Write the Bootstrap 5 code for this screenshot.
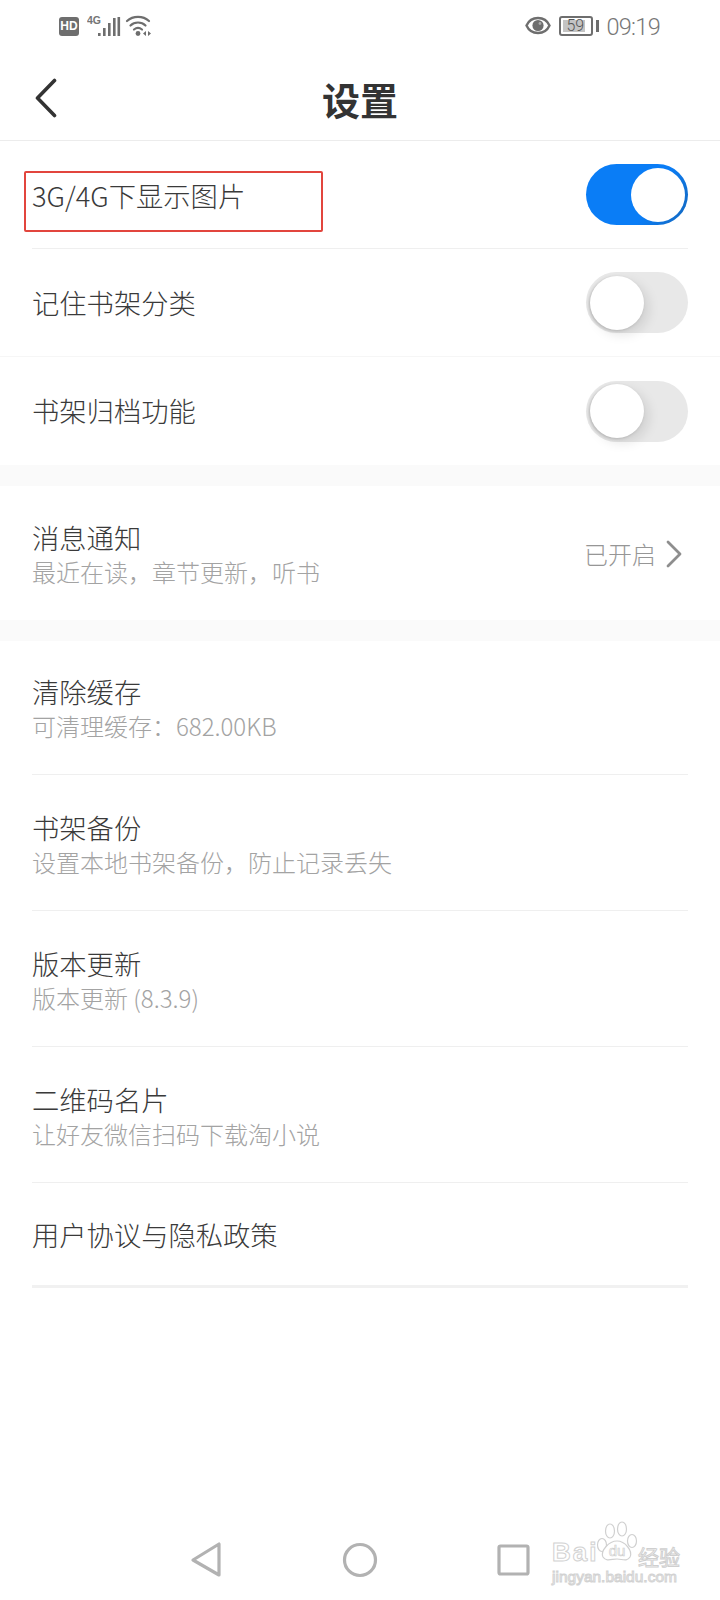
<!DOCTYPE html>
<html lang="zh-CN">
<head>
  <meta charset="UTF-8">
  <title>设置</title>
  <link href="https://cdn.jsdelivr.net/npm/bootstrap@5.3.0/dist/css/bootstrap.min.css" rel="stylesheet">
  <style>
    body { width: 720px; height: 1600px; overflow: hidden; background: #fff; color: #3a3a3a; font-family: "Noto Sans CJK SC", "Noto Sans", sans-serif; font-weight: 300; }
    .phone { width: 720px; height: 1600px; }
    .status-bar { height: 56px; padding: 15px 60px 0 59px; color: #757575; }
    .hd-tag { width: 20px; height: 19px; margin-top: 2px; background: #6e6e6e; color: #fff; border-radius: 3px; font: 700 12px/19px "Liberation Sans", sans-serif; text-align: center; }
    .eye-icon { margin: 1px 8px 0 0; }
    .clock { font: 300 23.5px/24px "Roboto", sans-serif; letter-spacing: -.7px; color: #777; margin-left: 7px; }
    .batt { width: 34px; height: 20px; margin-top: 1px; border: 2px solid #6e6e6e; border-radius: 3px; padding: 2px; }
    .batt-fill { width: 22px; height: 12px; background: #c4c4c4; font: 300 16px/12px "Roboto", sans-serif; color: #555; padding-left: 3px; }
    .batt-nub { width: 3px; height: 12px; background: #6e6e6e; margin: 5px 0 0 3px; }
    .top-bar { height: 85px; border-bottom: 1px solid #ececec; }
    .top-side { width: 100px; padding-left: 35px; }
    .top-title { font-size: 38px; font-weight: 700; color: #333; line-height: 85px; }
    .row-s { height: 108px; }
    .row-s.line-full { border-bottom: 1px solid #f6f6f6; }
    .row-s .row-label { padding-bottom: 2px; }
    .row-s .label-low { padding-bottom: 0; }
    .inset { margin: 0 32px 0 32px; }
    .inset-line { border-bottom: 1px solid #efefef; }
    .row-label { font-size: 27.3px; line-height: 36px; color: #3a3a3a; }
    .row-sub { font-size: 24px; line-height: 36px; color: #a3a3a3; }
    .band { height: 21px; background: #fafafa; }
    .row-t { height: 136px; padding-top: 35px; }
    .row-t.first { height: 134px; padding-top: 33px; }
    .row-n { height: 134px; padding-top: 34px; }
    .row-t .row-label, .row-n .row-label { line-height: 34px; }
    .row-last { height: 105px; border-bottom: 3px solid #f1f1f1; }
    .row-right { font-size: 24px; color: #969696; padding-right: 6px; }
    .chev-r { margin-left: 10px; }
    .toggle { width: 102px; height: 61px; border-radius: 31px; padding: 4px; background: #e8e8e8; }
    .toggle.on { background: linear-gradient(120deg, #0a7df6 62%, #1467bc 100%); justify-content: flex-end; padding-right: 3px; }
    .knob { width: 54px; height: 54px; border-radius: 50%; background: #fff; box-shadow: -1px 1px 3px #b4b4b4, 5px 5px 12px rgba(0,0,0,.1); }
    .on .knob { box-shadow: none; }
    .nav-keys { height: 80px; }
    .red-box { left: 24px; top: 171px; width: 299px; height: 61px; border: 2px solid #e2453d; border-radius: 2px; }
    .wm { left: 552px; top: 1516px; width: 140px; height: 72px; }
    .wm-bai, .wm-jy { color: #fff; -webkit-text-stroke: 1px #d2d2d2; font-family: "Liberation Sans", sans-serif; }
    .wm-bai { left: 0; top: 20px; font-size: 26px; line-height: 32px; font-weight: 700; letter-spacing: 2px; }
    .wm-paw { left: 42px; top: 5px; }
    .wm-cn { left: 86px; top: 26px; font-size: 21px; line-height: 28px; color: #fff; -webkit-text-stroke: 1px #cfcfcf; font-weight: 400; white-space: nowrap; }
    .wm-jy { left: 0; top: 52px; font-size: 15.5px; line-height: 18px; white-space: nowrap; }
  </style>
</head>
<body>
  <div class="phone d-flex flex-column position-relative">

    <div class="status-bar d-flex justify-content-between flex-shrink-0">
      <div class="d-flex align-items-start">
        <div class="hd-tag">HD</div>
        <svg width="72" height="22" viewBox="0 0 72 22" class="ms-2">
          <text x="0" y="9" font-family="Liberation Sans, sans-serif" font-size="10.5" font-weight="700" fill="#757575">4G</text>
          <g fill="#6e6e6e">
            <rect x="11" y="18" width="2.6" height="3"/><rect x="16" y="13" width="2.6" height="8"/>
            <rect x="21" y="8" width="2.6" height="13"/><rect x="26" y="3" width="2.6" height="18"/>
            <rect x="30.5" y="2" width="2.6" height="19"/>
          </g>
          <g fill="none" stroke="#6e6e6e" stroke-width="2.2" stroke-linecap="round">
            <path d="M40 6 C46 0.5 56 0.5 62 6"/>
            <path d="M43.5 10.5 C47.5 6.5 54.5 6.5 58.5 10.5"/>
            <path d="M47 14.5 C49.5 12.5 52.5 12.5 55 14.5"/>
          </g>
          <circle cx="51" cy="18.5" r="2.4" fill="#6e6e6e"/>
          <path d="M59 16 v5 l-3 -2.5z M61 16 v5 l3 -2.5z" fill="#6e6e6e"/>
        </svg>
      </div>
      <div class="d-flex align-items-start">
        <svg width="26" height="19" viewBox="0 0 26 19" class="eye-icon">
          <path d="M1.5 9.5 C6 -0.5 20 -0.5 24.5 9.5 C20 19.5 6 19.5 1.5 9.5z" fill="none" stroke="#6e6e6e" stroke-width="2.4"/>
          <circle cx="13" cy="9.5" r="5.6" fill="#6e6e6e"/>
          <circle cx="15" cy="7.5" r="1.4" fill="#aaa"/>
        </svg>
        <div class="batt flex-shrink-0"><div class="batt-fill">59</div></div>
        <div class="batt-nub"></div>
        <div class="clock">09:19</div>
      </div>
    </div>

    <div class="top-bar d-flex align-items-center flex-shrink-0">
      <div class="top-side">
        <svg width="22" height="40" viewBox="0 0 22 40" class="d-block">
          <path d="M19.5 2.5 L2.5 20 L19.5 37.5" fill="none" stroke="#333" stroke-width="3.6" stroke-linecap="round" stroke-linejoin="round"/>
        </svg>
      </div>
      <div class="flex-grow-1 text-center top-title">设置</div>
      <div class="top-side"></div>
    </div>

    <div class="row-s">
      <div class="inset inset-line h-100 d-flex align-items-center justify-content-between">
        <div class="row-label label-low">3G/4G下显示图片</div>
        <div class="toggle on d-flex align-items-center"><div class="knob"></div></div>
      </div>
    </div>
    <div class="row-s line-full">
      <div class="inset h-100 d-flex align-items-center justify-content-between">
        <div class="row-label">记住书架分类</div>
        <div class="toggle d-flex align-items-center"><div class="knob"></div></div>
      </div>
    </div>
    <div class="row-s">
      <div class="inset h-100 d-flex align-items-center justify-content-between">
        <div class="row-label">书架归档功能</div>
        <div class="toggle d-flex align-items-center"><div class="knob"></div></div>
      </div>
    </div>
    <div class="band"></div>

    <div class="inset row-n d-flex justify-content-between">
      <div>
        <div class="row-label">消息通知</div>
        <div class="row-sub">最近在读，章节更新，听书</div>
      </div>
      <div class="row-right d-flex align-items-center align-self-start mt-3">
        <span>已开启</span>
        <svg width="16" height="28" viewBox="0 0 16 28" class="chev-r">
          <path d="M2 2 L14 14 L2 26" fill="none" stroke="#8e8e8e" stroke-width="2.8" stroke-linecap="round" stroke-linejoin="round"/>
        </svg>
      </div>
    </div>
    <div class="band"></div>

    <div class="inset row-t first inset-line">
      <div class="row-label">清除缓存</div>
      <div class="row-sub">可清理缓存：682.00KB</div>
    </div>
    <div class="inset row-t inset-line">
      <div class="row-label">书架备份</div>
      <div class="row-sub">设置本地书架备份，防止记录丢失</div>
    </div>
    <div class="inset row-t inset-line">
      <div class="row-label">版本更新</div>
      <div class="row-sub">版本更新 (8.3.9)</div>
    </div>
    <div class="inset row-t inset-line">
      <div class="row-label">二维码名片</div>
      <div class="row-sub">让好友微信扫码下载淘小说</div>
    </div>
    <div class="inset row-last d-flex align-items-center">
      <div class="row-label">用户协议与隐私政策</div>
    </div>

    <div class="nav-keys mt-auto d-flex align-items-center flex-shrink-0">
      <svg width="720" height="40" viewBox="0 0 720 40" class="d-block">
        <g fill="none" stroke="#b2b2b2" stroke-width="3.2" stroke-linejoin="round">
          <path d="M219 4 L219 35 L193 20 Z"/>
          <circle cx="360" cy="20" r="15.5"/>
          <rect x="499" y="6" width="29" height="28" rx="1.5"/>
        </g>
      </svg>
    </div>

    <div class="red-box position-absolute"></div>

    <div class="wm position-absolute">
      <div class="wm-bai position-absolute">Bai</div>
      <svg width="50" height="46" viewBox="0 0 50 46" class="position-absolute wm-paw">
        <g fill="#fff" stroke="#d0d0d0" stroke-width="1.2">
          <ellipse cx="8" cy="24" rx="4.5" ry="6.5"/>
          <ellipse cx="16" cy="10" rx="4.5" ry="7"/>
          <ellipse cx="28" cy="8" rx="4.5" ry="7"/>
          <ellipse cx="38" cy="20" rx="4.5" ry="6.5"/>
          <path d="M23 20 C31 20 39 30 36 36 C33 41 28 38 23 38 C18 38 12 41 9 36 C6 30 15 20 23 20z"/>
        </g>
        <text x="23" y="35" text-anchor="middle" font-family="Liberation Sans, sans-serif" font-size="15" fill="#fff" stroke="#cfcfcf" stroke-width=".7">du</text>
      </svg>
      <div class="wm-cn position-absolute">经验</div>
      <div class="wm-jy position-absolute">jingyan.baidu.com</div>
    </div>
  </div>
  <script src="https://cdn.jsdelivr.net/npm/bootstrap@5.3.0/dist/js/bootstrap.bundle.min.js"></script>
</body>
</html>
